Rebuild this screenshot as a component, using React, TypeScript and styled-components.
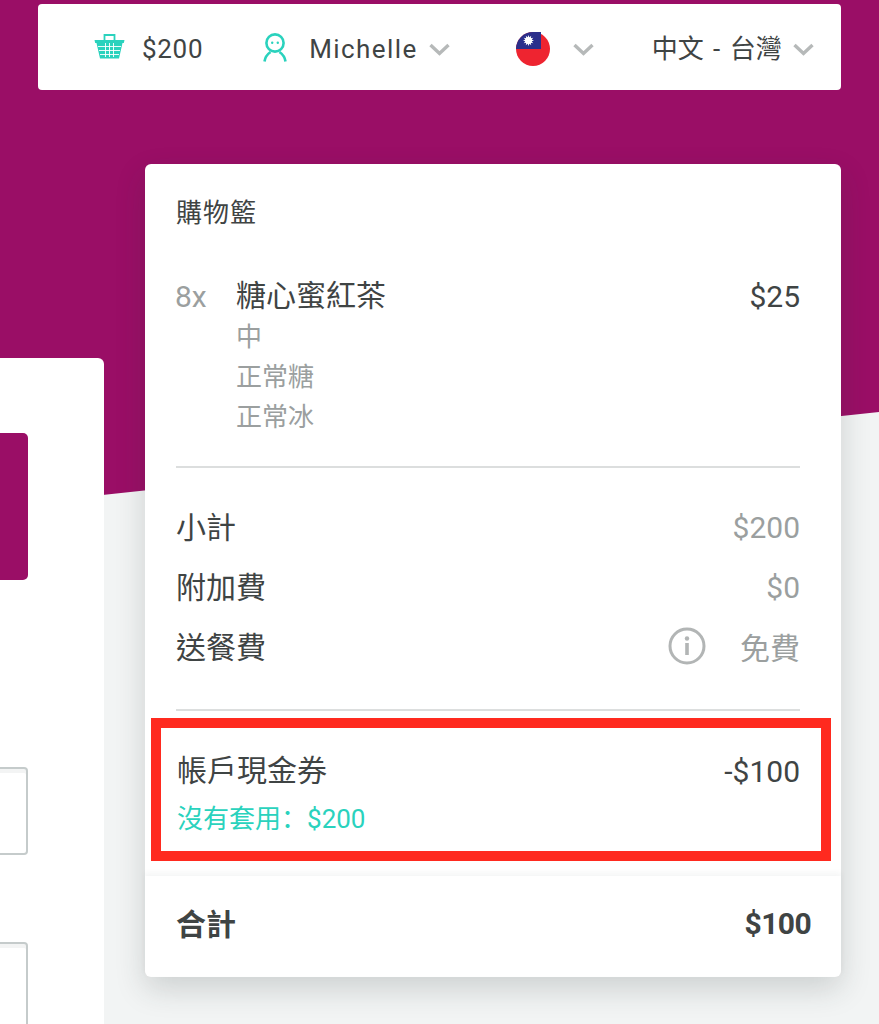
import styled, { createGlobalStyle } from "styled-components";

const PURPLE = "#9a0e66";
const TEXT = "#3f4444";
const GREY = "#9b9f9f";
const TEAL = "#2ad2bd";

const GlobalStyle = createGlobalStyle`
	html, body {
		margin: 0;
		padding: 0;
		height: 1024px;
		overflow: hidden;
		background: #f2f4f4;
	}
	* {
		box-sizing: border-box;
	}
`;

const Page = styled.div`
	position: relative;
	width: 879px;
	height: 1024px;
	overflow: hidden;
	padding: 4px 38px 0 0;
	font-family: Roboto, "Noto Sans CJK TC", sans-serif;
	color: ${TEXT};
`;

const Backdrop = styled.div`
	position: absolute;
	inset: 0;
	background: ${PURPLE};
	clip-path: polygon(0 0, 100% 0, 100% 412px, 0 506px);
`;

const Header = styled.header`
	position: relative;
	display: flex;
	align-items: center;
	height: 86px;
	margin-left: 38px;
	padding: 4px 0 0 56px;
	background: #fff;
	border-radius: 4px;
	font-size: 26px;
`;

const HeaderText = styled.span<{ $left: number; $spacing?: number; $words?: number }>`
	margin-left: ${props => props.$left}px;
	letter-spacing: ${props => props.$spacing ?? 0}px;
	word-spacing: ${props => props.$words ?? 0}px;
	line-height: 40px;
	white-space: nowrap;
`;

const Chevron = styled.svg<{ $left: number }>`
	width: 21px;
	height: 13px;
	margin-left: ${props => props.$left}px;
	flex: none;
`;

const HeaderIcon = styled.svg<{ $left?: number; $top?: number }>`
	flex: none;
	margin-left: ${props => props.$left ?? 0}px;
	margin-top: ${props => props.$top ?? 0}px;
`;

const Main = styled.main`
	position: relative;
	display: flex;
	align-items: flex-start;
`;

const LeftPanel = styled.section`
	flex: none;
	width: 104px;
	height: 700px;
	margin-top: 268px;
	padding-top: 75px;
	background: #fff;
	border-top-right-radius: 6px;
`;

const Banner = styled.div`
	width: 28px;
	height: 147px;
	background: ${PURPLE};
	border-radius: 0 5px 5px 0;
`;

const Field = styled.div<{ $top: number }>`
	width: 28px;
	height: 88px;
	margin-top: ${props => props.$top}px;
	background: #fff;
	border: 2px solid #c5cbcb;
	border-left: none;
	border-radius: 0 4px 4px 0;
	box-shadow: inset 0 4px 0 #f3f4f4;
`;

const Cart = styled.section`
	flex: none;
	width: 696px;
	height: 813px;
	margin: 74px 0 0 41px;
	padding-top: 29px;
	background: #fff;
	border-radius: 6px;
	box-shadow: 0 12px 30px rgba(40, 50, 50, 0.18);
`;

const CartTitle = styled.h2`
	margin: 0 0 43px 31px;
	font-size: 26px;
	font-weight: 400;
	letter-spacing: 1px;
	line-height: 40px;
`;

const ItemRow = styled.div`
	display: flex;
	padding: 0 41px 0 30px;
	font-size: 30px;
	line-height: 40px;
`;

const Qty = styled.span`
	width: 61px;
	padding-top: 1px;
	color: ${GREY};
`;

const ItemBody = styled.div`
	flex: 1;
`;

const Options = styled.div`
	margin-top: 1px;
`;

const Option = styled.div`
	font-size: 26px;
	line-height: 40px;
	color: ${GREY};
`;

const Price = styled.span`
	padding-top: 1px;
	font-weight: 400;
`;

const Divider = styled.hr<{ $top: number; $bottom: number }>`
	height: 2px;
	margin: ${props => props.$top}px 41px ${props => props.$bottom}px 31px;
	border: none;
	background: #dcdede;
`;

const FeeRow = styled.div`
	display: flex;
	align-items: center;
	height: 60px;
	padding: 0 41px 0 31px;
	font-size: 30px;
`;

const FeeLabel = styled.span`
	flex: 1;
	padding-bottom: 3px;
`;

const FeeValue = styled.span<{ $latin?: boolean }>`
	padding-top: ${props => (props.$latin ? 2 : 0)}px;
	color: ${GREY};
`;

const InfoIcon = styled.svg`
	width: 38px;
	height: 38px;
	margin-right: 34px;
	flex: none;
`;

const Voucher = styled.div`
	height: 143px;
	margin: 0 10px 0 6px;
	padding: 23px 21px 0 16px;
	border: 10px solid #ff2a1f;
`;

const VoucherRow = styled.div`
	display: flex;
	justify-content: space-between;
	font-size: 30px;
	line-height: 40px;
`;

const VoucherNote = styled.div`
	margin-top: 7px;
	font-size: 26px;
	line-height: 40px;
	color: ${TEAL};
`;

const NoteColon = styled.span`
	font-family: "Noto Sans CJK SC", sans-serif;
	line-height: 1;
`;

const Total = styled.div`
	display: flex;
	justify-content: space-between;
	align-items: center;
	height: 100px;
	margin-top: 15px;
	padding: 0 30px 0 31px;
	font-size: 30px;
	font-weight: 700;
	box-shadow: 0 -3px 6px rgba(40, 50, 50, 0.05);
`;

const TotalLabel = styled.span`
	padding-bottom: 8px;
`;

const TotalValue = styled.span`
	padding-bottom: 5px;
	letter-spacing: -0.6px;
`;

function Caret({ left }: { left: number }) {
	return (
		<Chevron $left={left} viewBox="0 0 21 13" fill="none">
			<path d="M1.5 2 10.5 10.5 19.5 2" stroke="#b6b9b9" strokeWidth="3.4" />
		</Chevron>
	);
}

function Basket() {
	return (
		<HeaderIcon $top={-5} width="31" height="25" viewBox="0 0 31 25" fill="none">
			<path d="M10.5 7V1h10v6" stroke={TEAL} strokeWidth="1.8" />
			<path d="M.5 6h30l-.7 3h-1.3l-3.5 15.5H6L2.5 9H1.2z" fill={TEAL} />
			<path
				d="M4 12.5h23M5 16.5h21M6 20.5h19M11.5 9v14M15.5 9v14M19.5 9v14"
				stroke="#fff"
				strokeWidth="0.9"
			/>
		</HeaderIcon>
	);
}

function Person() {
	return (
		<HeaderIcon $left={60} $top={-4} width="24" height="29" viewBox="0 0 24 29" fill="none">
			<circle cx="12" cy="10" r="8.6" stroke={TEAL} strokeWidth="2.6" />
			<circle cx="9.2" cy="9.8" r="1.2" fill={TEAL} />
			<circle cx="14.8" cy="9.8" r="1.2" fill={TEAL} />
			<path d="M1.5 28.5c.5-4 2.5-7 6-9.5M22.5 28.5c-.5-4-2.5-7-6-9.5" stroke={TEAL} strokeWidth="2.6" />
		</HeaderIcon>
	);
}

function Flag() {
	const rays = Array.from({ length: 12 }, (_, i) => i * 30);
	return (
		<HeaderIcon $left={66} width="34" height="34" viewBox="0 0 34 34">
			<circle cx="17" cy="17" r="17" fill="#ee2430" />
			<path d="M0 17A17 17 0 0 1 17 0h8v17z" fill="#2b2f8b" />
			<g fill="#fff">
				{rays.map(deg => (
					<path key={deg} d="M12.5 3 11.2 6.6h2.6z" transform={`rotate(${deg} 12.5 8.5)`} />
				))}
				<circle cx="12.5" cy="8.5" r="3.3" />
			</g>
		</HeaderIcon>
	);
}

function App() {
	return (
		<Page>
			<GlobalStyle />
			<Backdrop />
			<Header>
				<Basket />
				<HeaderText $left={17} $spacing={0.7}>
					$200
				</HeaderText>
				<Person />
				<HeaderText $left={22} $spacing={1.4}>
					Michelle
				</HeaderText>
				<Caret left={11} />
				<Flag />
				<Caret left={23} />
				<HeaderText $left={58} $words={3}>
					中文 - 台灣
				</HeaderText>
				<Caret left={11} />
			</Header>
			<Main>
				<LeftPanel>
					<Banner />
					<Field $top={187} />
					<Field $top={87} />
				</LeftPanel>
				<Cart>
					<CartTitle>購物籃</CartTitle>
					<ItemRow>
						<Qty>8x</Qty>
						<ItemBody>
							糖心蜜紅茶
							<Options>
								<Option>中</Option>
								<Option>正常糖</Option>
								<Option>正常冰</Option>
							</Options>
						</ItemBody>
						<Price>$25</Price>
					</ItemRow>
					<Divider $top={29} $bottom={28} />
					<FeeRow>
						<FeeLabel>小計</FeeLabel>
						<FeeValue $latin>$200</FeeValue>
					</FeeRow>
					<FeeRow>
						<FeeLabel>附加費</FeeLabel>
						<FeeValue $latin>$0</FeeValue>
					</FeeRow>
					<FeeRow>
						<FeeLabel>送餐費</FeeLabel>
						<InfoIcon viewBox="0 0 38 38" fill="none">
							<circle cx="19" cy="19" r="17" stroke="#b2b5b5" strokeWidth="3" />
							<circle cx="19" cy="11.5" r="2.2" fill="#b2b5b5" />
							<path d="M19 16v12" stroke="#b2b5b5" strokeWidth="3.6" />
						</InfoIcon>
						<FeeValue>免費</FeeValue>
					</FeeRow>
					<Divider $top={33} $bottom={7} />
					<Voucher>
						<VoucherRow>
							<span>帳戶現金券</span>
							<Price>-$100</Price>
						</VoucherRow>
						<VoucherNote>
							沒有套用<NoteColon>：</NoteColon>$200
						</VoucherNote>
					</Voucher>
					<Total>
						<TotalLabel>合計</TotalLabel>
						<TotalValue>$100</TotalValue>
					</Total>
				</Cart>
			</Main>
		</Page>
	);
}

export default App;
